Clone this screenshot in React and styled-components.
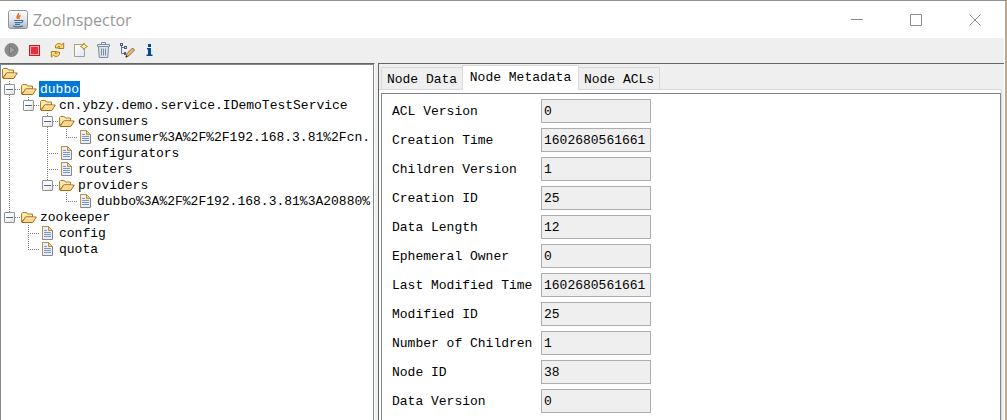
import React, { useState } from "react";
import styled, { createGlobalStyle, css } from "styled-components";

const GlobalStyle = createGlobalStyle`
  *, *::before, *::after { box-sizing: border-box; }
  body {
    margin: 0;
    overflow: hidden;
    color: #000;
    font: 13px/16px "Liberation Mono", monospace;
  }
  button, input { font: inherit; color: inherit; }
`;

const Desktop = styled.div`
  min-height: 100vh;
  display: flex;
  flex-direction: column;
  padding-right: 2px;
  border-top: 1px solid #8f958f;
  background: #b9a88e;
`;

const Window = styled.div`
  flex: 1;
  display: flex;
  flex-direction: column;
  border-right: 1px solid #fff;
  background: #efefef;
`;

const TitleBar = styled.header`
  display: flex;
  align-items: center;
  height: 37px;
  padding-left: 8px;
  background: #fff;
`;

const Title = styled.h1`
  flex: 1;
  margin: 0 0 0 5px;
  color: #999;
  font: 400 16px/20px "Open Sans", "Noto Sans", sans-serif;
`;

const CaptionButton = styled.button`
  display: flex;
  align-items: center;
  justify-content: center;
  width: 59px;
  height: 36px;
  padding: 0;
  border: 0;
  background: none;
`;

const Toolbar = styled.div`
  display: flex;
  height: 25px;
`;

const ToolButton = styled.button`
  display: flex;
  align-items: center;
  justify-content: center;
  width: 23px;
  height: 24px;
  padding: 0;
  border: 0;
  background: none;
`;

const Split = styled.main`
  flex: 1;
  display: flex;
  gap: 3px;
`;

const TreePane = styled.section`
  flex: 0 0 375px;
  min-width: 0;
  display: flex;
  border-top: 1px solid #646464;
  border-right: 1px solid #fff;
`;

const Tree = styled.ul`
  flex: 1;
  min-width: 0;
  margin: 0;
  padding: 0 0 0 1px;
  overflow: hidden;
  list-style: none;
  border: solid #828790;
  border-width: 1px 1px 0;
  background: #fff;
`;

const TreeRow = styled.li`
  display: flex;
  height: 16px;
  white-space: nowrap;
`;

const vertical = "repeating-linear-gradient(180deg, #808080 0 1px, transparent 1px 2px)";
const horizontal = "repeating-linear-gradient(90deg, #808080 0 1px, transparent 1px 2px)";

const guides = {
  none: css``,
  line: css`background: ${vertical} 7px 0 / 1px 16px no-repeat;`,
  tee: css`
    background: ${vertical} 7px 0 / 1px 16px no-repeat,
      ${horizontal} 7px 8px / 12px 1px no-repeat;
  `,
  end: css`
    background: ${vertical} 7px 0 / 1px 8px no-repeat,
      ${horizontal} 7px 8px / 12px 1px no-repeat;
  `,
};

const Guide = styled.span`
  flex: none;
  width: 19px;
  height: 16px;
  padding: 3px 0 0 2px;
  ${(p) => guides[p.$kind]}
`;

const Expander = styled.button`
  display: flex;
  align-items: center;
  justify-content: center;
  width: 11px;
  height: 11px;
  padding: 0;
  border: 1px solid #919191;
  border-radius: 1px;
  background: linear-gradient(135deg, #fff 40%, #dcdcdc);
  &::before {
    content: "";
    width: 7px;
    height: 1px;
    background: #4b63a7;
  }
`;

const NodeIcon = styled.span`
  flex: none;
  display: flex;
  align-items: center;
  width: 18px;
  padding-left: ${(p) => (p.$leaf ? 2 : 0)}px;
`;

const NodeLabel = styled.span`
  padding: 2px 1px 0;
  line-height: 14px;
  color: ${(p) => (p.$selected ? "#fff" : "#000")};
  background: ${(p) => (p.$selected ? "#0078d7" : "none")};
`;

const Details = styled.section`
  flex: 1;
  min-width: 0;
  display: flex;
  flex-direction: column;
  padding: 1px 2px 0 0;
  border: solid #646464;
  border-width: 1px 0 0 1px;
`;

const TabList = styled.div`
  display: flex;
  align-items: flex-end;
  height: 25px;
  padding-left: 2px;
  border-bottom: 1px solid #d9d9d9;
`;

const Tab = styled.button`
  width: ${(p) => (p.$active ? 117 : 82)}px;
  height: ${(p) => (p.$active ? 25 : 22)}px;
  padding: ${(p) => (p.$active ? 0 : 2)}px 0 0;
  margin-left: ${(p) => (p.$joined ? -1 : 0)}px;
  margin-bottom: ${(p) => (p.$active ? -1 : 0)}px;
  border: 1px solid #d9d9d9;
  border-bottom: 0;
  background: ${(p) => (p.$active ? "#fff" : "#efefef")};
`;

const TabPanel = styled.div`
  flex: 1;
  display: flex;
  padding: 3px 0 0 2px;
  border-right: 1px solid #d9d9d9;
  background: #fff;
`;

const Form = styled.form`
  flex: 1;
  display: grid;
  grid-template-columns: 149px 110px;
  align-content: start;
  row-gap: 5px;
  padding: 5px 10px 0;
  border: solid #828790;
  border-width: 1px 1px 0;
`;

const FieldLabel = styled.label`
  padding-top: 5px;
  white-space: nowrap;
`;

const Field = styled.input`
  width: 100%;
  height: 24px;
  padding: 0 2px;
  border: 1px solid #abadb3;
  border-radius: 0;
  outline: 0;
  background: #efefef;
`;

const JavaIcon = () => (
  <svg width="20" height="20" viewBox="0 0 20 20" fill="none">
    <defs>
      <linearGradient id="java" x1="0" y1="0" x2="0" y2="1">
        <stop offset="0" stopColor="#fff" />
        <stop offset=".5" stopColor="#e4e8ec" />
        <stop offset="1" stopColor="#a9b4be" />
      </linearGradient>
    </defs>
    <rect x=".5" y=".5" width="19" height="18" rx="2" fill="url(#java)" stroke="#8b959e" />
    <path d="M10.500 3c1 2-3 3-1 6M12.500 5.500c-2.500 1-2 2-1 3.500" stroke="#e66b24" strokeWidth="1.500" />
    <path d="M6 10.500h7M6.500 12.500h6M7 14.300h5M13 10.500c3-.5 2 2-.5 2.500M5 16c3 1 7 1 10 0" stroke="#46739a" strokeWidth="1.200" />
  </svg>
);

const toolIcons = {
  Connect: (
    <svg width="16" height="16" viewBox="0 0 16 16">
      <circle cx="7.500" cy="8" r="6.500" fill="#8a8a8a" stroke="#808080" />
      <path d="M5.500 3.500v9l6-4.500z" fill="#a2a2a2" stroke="#757575" />
    </svg>
  ),
  Disconnect: (
    <svg width="16" height="16" viewBox="0 0 16 16">
      <rect x="2.500" y="3.500" width="10" height="10" fill="#e3303c" stroke="#b5232b" />
      <rect x="3.500" y="4.500" width="8" height="8" fill="none" stroke="#f6a0a4" />
    </svg>
  ),
  Refresh: (
    <svg width="16" height="16" viewBox="0 0 16 16" strokeLinejoin="round">
      <g fill="#fbd978" stroke="#b07c17">
        <path d="M5.500 6V3.800C6.300 1.500 9.500.7 11.500 2.700L13.700 1v5.500H8.300L10 4.800C8.800 3.800 7.800 4.600 7.700 6z" />
        <path d="M9.500 10v2.200C8.700 14.500 5.500 15.300 3.500 13.300L1.300 15V9.500h5.400L5 11.200C6.200 12.200 7.200 11.400 7.300 10z" />
      </g>
    </svg>
  ),
  "Add Node": (
    <svg width="16" height="16" viewBox="0 0 16 16">
      <defs>
        <linearGradient id="page" x1="0" y1="0" x2="1" y2="1">
          <stop offset="0" stopColor="#fff" />
          <stop offset="1" stopColor="#dce7f8" />
        </linearGradient>
      </defs>
      <path d="M1.500 2.500h10v12h-10z" fill="url(#page)" stroke="#9aa0a0" />
      <path d="M1.500 14V2.500H8" fill="none" stroke="#b3a06a" />
      <path d="M11 1l1.200 2.300 2.300 1.200-2.300 1.200L11 8 9.800 5.700 7.500 4.500l2.300-1.200z" fill="#fff2a8" stroke="#b38b26" />
    </svg>
  ),
  "Delete Node": (
    <svg width="16" height="16" viewBox="0 0 16 16" fill="none" stroke="#7b8a9e">
      <path d="M2.500 4.500l.7 11h8.600l.7-11z" fill="#dfe4ec" />
      <path d="M1.500 2.500h12v2h-12zM5.500 2V.500h4V2" fill="#edf1f6" />
      <path d="M5.500 6.500v7M7.500 6.500v7M9.500 6.500v7" />
    </svg>
  ),
  "Node Viewers": (
    <svg width="16" height="16" viewBox="0 0 16 16" fill="none">
      <path d="M2.500 3v8.500H5M2.500 5.500H5" stroke="#61748f" />
      <path d="M1 1h3v3H1zM5 4h3v3H5zM5 10h2v3H5z" fill="#41608e" />
      <path d="M2 2h1v1H2zM6 5h1v1H6z" fill="#e3edfb" />
      <path d="M7 15l1-3.500L13.500 6 15.500 8 10 13.700z" fill="#f3c06c" stroke="#866238" />
      <path d="M6.500 15.500l.8-2.300 1.500 1.500z" fill="#222" />
    </svg>
  ),
  About: (
    <svg width="16" height="16" viewBox="0 0 16 16" fill="#004b94">
      <path d="M6 2h3v3H6zM5 6h4v6.500h1.500V14H4.500v-1.500H6v-5H5z" />
    </svg>
  ),
};

const FolderIcon = () => (
  <svg width="16" height="16" viewBox="0 0 16 16" strokeLinejoin="round">
    <path d="M.5 13V4.500l1-1h4l1 1.500h5v3H5z" fill="#fce9ac" stroke="#b07a2c" />
    <path d="M1 13.500l3.500-5.500h10.800l-3.500 5.500z" fill="#fbd58a" stroke="#a66c1d" />
    <path d="M5 9h8.500" stroke="#fff0c5" />
  </svg>
);

const FileIcon = () => (
  <svg width="11" height="14" viewBox="0 0 11 14">
    <path d="M.5.5h6l4 4v9H.5z" fill="#e8effa" stroke="#7f8894" />
    <path d="M.5 13V.5h6l3.500 3.500" fill="none" stroke="#b99345" />
    <path d="M6.500.5v4h4z" fill="#efd489" stroke="#b99345" />
    <path d="M2 4.500h3M2 6.500h7M2 8.500h7M2 10.500h7" stroke="#7a97c8" />
  </svg>
);

const nodes = [
  { label: "", guides: [] },
  { label: "dubbo", guides: ["tee"], open: true },
  { label: "cn.ybzy.demo.service.IDemoTestService", guides: ["line", "end"], open: true },
  { label: "consumers", guides: ["line", "none", "tee"], open: true },
  { label: "consumer%3A%2F%2F192.168.3.81%2Fcn.", guides: ["line", "none", "line", "end"], leaf: true },
  { label: "configurators", guides: ["line", "none", "tee"], leaf: true },
  { label: "routers", guides: ["line", "none", "tee"], leaf: true },
  { label: "providers", guides: ["line", "none", "end"], open: true },
  { label: "dubbo%3A%2F%2F192.168.3.81%3A20880%", guides: ["line", "none", "none", "end"], leaf: true },
  { label: "zookeeper", guides: ["end"], open: true },
  { label: "config", guides: ["none", "tee"], leaf: true },
  { label: "quota", guides: ["none", "end"], leaf: true },
];

const metadata = [
  ["ACL Version", "0"],
  ["Creation Time", "1602680561661"],
  ["Children Version", "1"],
  ["Creation ID", "25"],
  ["Data Length", "12"],
  ["Ephemeral Owner", "0"],
  ["Last Modified Time", "1602680561661"],
  ["Modified ID", "25"],
  ["Number of Children", "1"],
  ["Node ID", "38"],
  ["Data Version", "0"],
];

const captions = [
  ["Minimize", "M0 5.500h12"],
  ["Maximize", "M.5.5h11v11H.5z"],
  ["Close", "M.5.5l11 11M11.500.5l-11 11"],
];

export default function App() {
  const [selected, setSelected] = useState(1);
  return (
    <Desktop>
      <GlobalStyle />
      <Window>
        <TitleBar>
          <JavaIcon />
          <Title>ZooInspector</Title>
          {captions.map(([name, d]) => (
            <CaptionButton key={name} aria-label={name}>
              <svg width="12" height="12" viewBox="0 0 12 12" fill="none" stroke="#8c8c8c">
                <path d={d} />
              </svg>
            </CaptionButton>
          ))}
        </TitleBar>
        <Toolbar role="toolbar">
          {Object.entries(toolIcons).map(([name, icon]) => (
            <ToolButton key={name} aria-label={name}>{icon}</ToolButton>
          ))}
        </Toolbar>
        <Split>
          <TreePane>
            <Tree role="tree">
              {nodes.map((node, i) => (
                <TreeRow
                  key={i}
                  role="treeitem"
                  aria-level={node.guides.length + 1}
                  aria-selected={selected === i}
                  onClick={() => setSelected(i)}
                >
                  {node.guides.map((kind, g) => (
                    <Guide key={g} $kind={kind}>
                      {node.open && g === node.guides.length - 1 && (
                        <Expander aria-label={`Collapse ${node.label}`} />
                      )}
                    </Guide>
                  ))}
                  <NodeIcon $leaf={node.leaf}>{node.leaf ? <FileIcon /> : <FolderIcon />}</NodeIcon>
                  {node.label && <NodeLabel $selected={selected === i}>{node.label}</NodeLabel>}
                </TreeRow>
              ))}
            </Tree>
          </TreePane>
          <Details>
            <TabList role="tablist">
              <Tab role="tab" aria-selected="false">Node Data</Tab>
              <Tab role="tab" aria-selected="true" $active $joined>Node Metadata</Tab>
              <Tab role="tab" aria-selected="false" $joined>Node ACLs</Tab>
            </TabList>
            <TabPanel role="tabpanel">
              <Form>
                {metadata.map(([name, value]) => (
                  <React.Fragment key={name}>
                    <FieldLabel htmlFor={name.replaceAll(" ", "-")}>{name}</FieldLabel>
                    <Field id={name.replaceAll(" ", "-")} value={value} readOnly />
                  </React.Fragment>
                ))}
              </Form>
            </TabPanel>
          </Details>
        </Split>
      </Window>
    </Desktop>
  );
}
